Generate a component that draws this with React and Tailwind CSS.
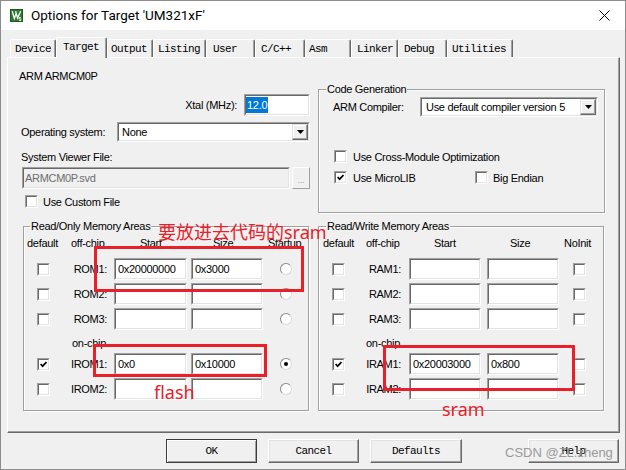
import React from "react";

const MONO = "font-['Liberation_Mono',monospace] text-[11px] tracking-[-0.6px]";

function Field({ className = "", inner = "bg-white", children }) {
  return (
    <div className={"border border-t-[#a0a0a0] border-l-[#a0a0a0] border-r-white border-b-white " + className}>
      <div className={"w-full h-full border border-t-[#696969] border-l-[#696969] border-r-[#e3e3e3] border-b-[#e3e3e3] flex items-center " + inner}>
        {children}
      </div>
    </div>
  );
}

function Check({ checked }) {
  return (
    <Field className="w-[13px] h-[13px] shrink-0" inner="bg-white justify-center">
      {checked && (
        <svg width="7" height="7" viewBox="0 0 7 7">
          <polyline points="0.6,3 2.6,5.2 6.5,1" fill="none" stroke="#000" strokeWidth="1.7" />
        </svg>
      )}
    </Field>
  );
}

function Radio({ checked }) {
  return (
    <span className="w-[12px] h-[12px] shrink-0 rounded-full border border-t-[#8a8a8a] border-l-[#8a8a8a] border-r-[#dcdcdc] border-b-[#dcdcdc] bg-white flex items-center justify-center">
      {checked && <span className="w-[4px] h-[4px] rounded-full bg-black" />}
    </span>
  );
}

function DropBtn() {
  return (
    <div className="w-[16px] h-full shrink-0 border border-t-[#e3e3e3] border-l-[#e3e3e3] border-r-[#696969] border-b-[#696969] shadow-[inset_-1px_-1px_0_#a0a0a0,inset_1px_1px_0_#fff] bg-[#f0f0f0] flex items-center justify-center">
      <svg width="7" height="4" viewBox="0 0 7 4">
        <path d="M0 0H7L3.5 4Z" fill="#000" />
      </svg>
    </div>
  );
}

function Group({ className = "", legend, lm = "ml-[7px]", children }) {
  return (
    <fieldset className={"border border-[#a0a0a0] shadow-[inset_1px_1px_0_#fff,1px_1px_0_#fff] " + className}>
      <legend className={"bg-[#f0f0f0] px-[1px] leading-[14px] " + lm}>{legend}</legend>
      {children}
    </fieldset>
  );
}

const tabs = [
  { label: "Device", cls: "w-[46px] pl-[4px]" },
  { label: "Target", cls: "w-[51px] pl-[6px]", active: true },
  { label: "Output", cls: "w-[46px] pl-[3px]" },
  { label: "Listing", cls: "w-[53px] pl-[4px]" },
  { label: "User", cls: "w-[49px] pl-[6px]" },
  { label: "C/C++", cls: "w-[50px] pl-[5px]" },
  { label: "Asm", cls: "w-[46px] pl-[3px]" },
  { label: "Linker", cls: "w-[47px] pl-[5px]" },
  { label: "Debug", cls: "w-[49px] pl-[5px]" },
  { label: "Utilities", cls: "w-[66px] pl-[4px]" },
];

function Tabs() {
  return (
    <div className={"flex items-start h-[20px] ml-[3px] " + MONO}>
      {tabs.map((t) =>
        t.active ? (
          <div
            key={t.label}
            className={"relative z-10 h-[21px] bg-[#f0f0f0] rounded-tl-[2px] rounded-tr-[2px] border-t border-l border-t-white border-l-white border-r border-r-[#696969] shadow-[inset_-1px_0_0_#a0a0a0] flex items-center pb-[3px] " + t.cls}
          >
            {t.label}
          </div>
        ) : (
          <div
            key={t.label}
            className={"mt-[2px] h-[18px] bg-[#f0f0f0] rounded-tl-[2px] rounded-tr-[2px] border-t border-l border-t-white border-l-white border-r border-r-[#696969] shadow-[inset_-1px_0_0_#a0a0a0] flex items-center " + t.cls}
          >
            {t.label}
          </div>
        )
      )}
    </div>
  );
}

function RORow({ label, checked, start = "", size = "", radio }) {
  return (
    <div className="flex items-center h-[22px] pl-[13px]">
      <Check checked={checked} />
      <span className="w-[57px] text-right">{label}</span>
      <Field className="ml-[7px] w-[73px] h-[22px]">
        <span className="pl-[2px]">{start}</span>
      </Field>
      <Field className="ml-[4px] w-[72px] h-[22px]">
        <span className="pl-[2px]">{size}</span>
      </Field>
      <span className="ml-[17px]">
        <Radio checked={radio} />
      </span>
    </div>
  );
}

function RWRow({ label, checked, start = "", size = "" }) {
  return (
    <div className="flex items-center h-[22px] pl-[13px]">
      <Check checked={checked} />
      <span className="w-[56px] text-right">{label}</span>
      <Field className="ml-[8px] w-[72px] h-[22px]">
        <span className="pl-[2px]">{start}</span>
      </Field>
      <Field className="ml-[6px] w-[72px] h-[22px]">
        <span className="pl-[2px]">{size}</span>
      </Field>
      <span className="ml-[14px]">
        <Check />
      </span>
    </div>
  );
}

function Button({ label, cls = "", def }) {
  return (
    <div
      className={
        "h-[24px] flex items-center justify-center bg-[#f0f0f0] " +
        (def
          ? "border border-[#3c3c3c] shadow-[inset_1px_1px_0_#fff,inset_-1px_-1px_0_#a0a0a0] "
          : "border border-t-white border-l-white border-r-[#696969] border-b-[#696969] shadow-[inset_-1px_-1px_0_#a0a0a0,inset_1px_1px_0_#e3e3e3] ") +
        cls
      }
    >
      {label}
    </div>
  );
}

function KeilIcon() {
  return (
    <svg width="13" height="13" viewBox="0 0 13 13">
      <rect x="0" y="0" width="13" height="13" fill="#2e7a30" />
      <rect x="0.5" y="0.5" width="12" height="12" fill="none" stroke="#1d5a20" />
      <path d="M2.2 2.2 L4.4 9.5 L6.3 4 M5.6 2.2 L7.6 9 L10.6 2.2" fill="none" stroke="#fff" strokeWidth="1.3" />
      <path d="M9 8.5 H11 M9 8.5 V10 H10.8 V11.6 H9" fill="none" stroke="#fff" strokeWidth="0.8" />
    </svg>
  );
}

export default function App() {
  return (
    <div className="relative w-[626px] h-[470px] bg-[#f0f0f0] border border-[#8c8c8c] flex flex-col overflow-hidden text-black font-['Liberation_Sans',Arial,sans-serif] text-[11px] tracking-[-0.3px] leading-[14px]">
      {/* Title bar */}
      <div className="h-[29px] shrink-0 bg-white flex items-center">
        <div className="ml-[9px] w-[13px] h-[13px] flex">
          <KeilIcon />
        </div>
        <span className="ml-[8px] font-['Roboto',sans-serif] text-[13.5px] tracking-normal leading-none">
          Options for Target 'UM321xF'
        </span>
        <svg className="ml-auto mr-[15px]" width="11" height="11" viewBox="0 0 11 11">
          <path d="M0.5 0.5 L10.5 10.5 M10.5 0.5 L0.5 10.5" stroke="#000" strokeWidth="1" />
        </svg>
      </div>

      <div className="flex flex-col pl-[6px] pr-[5px] pt-[7px]">
        <Tabs />

        {/* Tab panel */}
        <div className="relative h-[376px] border border-t-white border-l-white border-r-[#696969] border-b-[#696969] shadow-[inset_-1px_-1px_0_#a0a0a0] pt-[11px] pl-[11px] flex flex-col">
          {/* top row */}
          <div className="flex items-start">
            <div className="w-[291px] flex flex-col">
              <div className="h-[14px]">ARM ARMCM0P</div>
              <div className="mt-[11px] h-[22px] flex items-center justify-end">
                <span>Xtal (MHz):</span>
                <Field className="ml-[7px] w-[66px] h-[22px]">
                  <span className="bg-[#0078d7] text-white px-[1px] h-[16px] flex items-center">12.0</span>
                </Field>
              </div>
              <div className="mt-[6px] h-[20px] flex items-center">
                <span className="w-[98px] pl-[2px]">Operating system:</span>
                <Field className="w-[193px] h-[20px]">
                  <span className="flex-1 pl-[3px]">None</span>
                  <DropBtn />
                </Field>
              </div>
              <div className="mt-[8px] h-[14px] pl-[2px]">System Viewer File:</div>
              <div className="mt-[3px] h-[22px] flex ml-[3px]">
                <Field className="w-[268px] h-[22px]" inner="bg-[#f0f0f0]">
                  <span className="pl-[1px] text-[#6d6d6d]">ARMCM0P.svd</span>
                </Field>
                <div className="ml-[2px] w-[18px] h-[22px] border border-t-white border-l-white border-r-[#a0a0a0] border-b-[#a0a0a0] flex items-end justify-center pb-[3px] text-[#a0a0a0] text-[9px] leading-none">
                  ...
                </div>
              </div>
              <div className="mt-[6px] h-[13px] flex items-center ml-[6px]">
                <Check />
                <span className="ml-[5px]">Use Custom File</span>
              </div>
            </div>

            <Group className="ml-[8px] mt-[13px] w-[287px] h-[131px]" legend="Code Generation" lm="ml-[7px]">
              <div className="mt-[1px] h-[20px] flex items-center pl-[14px]">
                <span className="w-[87px]">ARM Compiler:</span>
                <Field className="w-[178px] h-[20px]">
                  <span className="flex-1 pl-[4px]">Use default compiler version 5</span>
                  <DropBtn />
                </Field>
              </div>
              <div className="mt-[33px] h-[13px] flex items-center pl-[15px]">
                <Check />
                <span className="ml-[6px]">Use Cross-Module Optimization</span>
              </div>
              <div className="mt-[8px] h-[13px] flex items-center pl-[15px]">
                <div className="w-[141px] flex items-center">
                  <Check checked />
                  <span className="ml-[6px]">Use MicroLIB</span>
                </div>
                <Check />
                <span className="ml-[5px]">Big Endian</span>
              </div>
            </Group>
          </div>

          {/* bottom row */}
          <div className="flex mt-[6px] ml-[4px]">
            <Group className="w-[286px] h-[192px]" legend="Read/Only Memory Areas" lm="ml-[6px]">
              <div className="mt-[3px] h-[14px] flex pl-[3px]">
                <span className="w-[44px]">default</span>
                <span className="w-[69px]">off-chip</span>
                <span className="w-[73px]">Start</span>
                <span className="w-[55px]">Size</span>
                <span>Startup</span>
              </div>
              <div className="mt-[8px] flex flex-col gap-[3px]">
                <RORow label="ROM1:" start="0x20000000" size="0x3000" />
                <RORow label="ROM2:" />
                <RORow label="ROM3:" />
              </div>
              <div className="mt-[6px] h-[14px] pl-[48px]">on-chip</div>
              <div className="mt-[3px] flex flex-col gap-[3px]">
                <RORow label="IROM1:" checked start="0x0" size="0x10000" radio />
                <RORow label="IROM2:" />
              </div>
            </Group>

            <Group className="ml-[9px] w-[286px] h-[192px]" legend="Read/Write Memory Areas" lm="ml-[7px]">
              <div className="mt-[3px] h-[14px] flex pl-[4px]">
                <span className="w-[43px]">default</span>
                <span className="w-[68px]">off-chip</span>
                <span className="w-[76px]">Start</span>
                <span className="w-[54px]">Size</span>
                <span>NoInit</span>
              </div>
              <div className="mt-[8px] flex flex-col gap-[3px]">
                <RWRow label="RAM1:" />
                <RWRow label="RAM2:" />
                <RWRow label="RAM3:" />
              </div>
              <div className="mt-[6px] h-[14px] pl-[47px]">on-chip</div>
              <div className="mt-[3px] flex flex-col gap-[3px]">
                <RWRow label="IRAM1:" checked start="0x20003000" size="0x800" />
                <RWRow label="IRAM2:" />
              </div>
            </Group>
          </div>
        </div>

        {/* Buttons */}
        <div className={"mt-[6px] flex " + MONO}>
          <Button label="OK" def cls="ml-[159px] w-[91px]" />
          <Button label="Cancel" cls="ml-[11px] w-[91px]" />
          <Button label="Defaults" cls="ml-[11px] w-[92px]" />
          <Button label="Help" cls="ml-[66px] w-[91px]" />
        </div>
      </div>

      {/* Annotations drawn over the screenshot */}
      <div className="absolute left-[93px] top-[245px] w-[210px] h-[46px] border-[3px] border-[#e8202a]" />
      <div className="absolute left-[92px] top-[343px] w-[174px] h-[33px] border-[3px] border-[#e8202a]" />
      <div className="absolute left-[382px] top-[344px] w-[192px] h-[46px] border-[3px] border-[#e8202a]" />
      <div className="absolute left-[157px] top-[222px] text-[18px] leading-none tracking-normal text-[#e8202a] font-['Noto_Sans','Noto_Sans_CJK_SC',sans-serif]">
        要放进去代码的sram
      </div>
      <div className="absolute left-[153px] top-[382px] text-[18px] leading-none tracking-normal text-[#e8202a] font-['Noto_Sans',sans-serif]">
        flash
      </div>
      <div className="absolute left-[441px] top-[399px] text-[18px] leading-none tracking-normal text-[#e8202a] font-['Noto_Sans',sans-serif]">
        sram
      </div>
      <div className="absolute left-[504px] top-[445px] text-[13px] leading-none tracking-normal text-[#9a9a9a] font-['Liberation_Sans',sans-serif]">
        CSDN @ZL.zheng
      </div>
    </div>
  );
}
